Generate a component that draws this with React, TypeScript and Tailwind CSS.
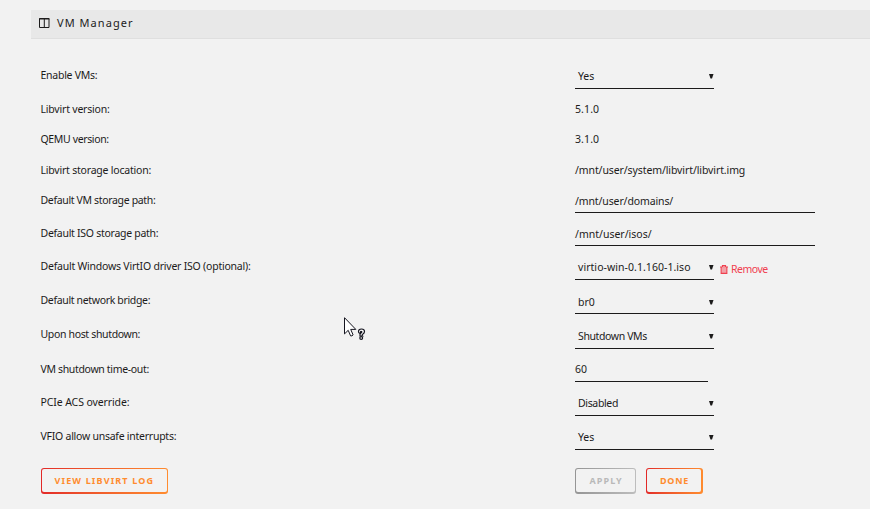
import type { ReactNode } from "react";
import clsx from "clsx";

type FieldProps = {
  children: ReactNode;
  className: string;
};

function Arrow() {
  return (
    <svg className="mt-[6px] mr-[0.5px] h-[5px] w-[4.5px] shrink-0" viewBox="0 0 4.5 5" fill="#1c1b1b">
      <path d="M0 0h4.5L3 4.5H1.5z" />
    </svg>
  );
}

function TrashIcon() {
  return (
    <svg className="h-[9px] w-2" viewBox="0 0 8 9" fill="none" stroke="currentColor">
      <path d="M0 2h8M2.5 1.5v-1h3v1M1.2 2v6.4h5.6V2" strokeWidth="1.2" />
      <path d="M3 3v5M5 3v5" strokeWidth="0.9" />
    </svg>
  );
}

function SelectField({ children, className }: FieldProps) {
  return (
    <div className={clsx("flex w-[139px] items-start justify-between border-b border-[#1c1b1b] pl-[3px]", className)}>
      <span>{children}</span>
      <Arrow />
    </div>
  );
}

function TextField({ children, className }: FieldProps) {
  return <div className={clsx("border-b border-[#1c1b1b]", className)}>{children}</div>;
}

type RowProps = {
  label: string;
  className: string;
  tracking: string;
  children: ReactNode;
};

function Row({ label, className, tracking, children }: RowProps) {
  return (
    <div className={clsx("flex items-start", className)}>
      <div className={clsx("w-[534.5px] shrink-0", tracking)}>{label}</div>
      {children}
    </div>
  );
}

type ActionButtonProps = {
  children: ReactNode;
  className: string;
  disabled?: boolean;
};

function ActionButton({ children, className, disabled }: ActionButtonProps) {
  return (
    <button
      disabled={disabled}
      className={clsx(
        "flex h-[26px] rounded-[3px] bg-linear-to-r pt-px pb-[2px] pl-px text-[9px] leading-[23px] font-bold",
        disabled ? "from-[#959595] to-[#bdbdbd] text-[#b9b9b9]" : "from-[#e22828] to-[#ff8c2f] text-[#ff8c2f]",
        className
      )}
    >
      <span className="h-[23px] w-full rounded-[2px] bg-[#f2f2f2] text-left whitespace-nowrap">{children}</span>
    </button>
  );
}

function HelpCursor() {
  return (
    <svg className="pointer-events-none absolute top-[317px] left-[344px] h-6 w-[22px]" viewBox="0 0 22 24">
      <path d="M.5.7v16.2l3.7-3.6 2.4 5.6q1.5.4 2.5-1L6.7 12.4h5.1z" fill="#fff" stroke="#15151f" />
      <path
        d="M14.5 14.5q0-2.5 3-2.5t3 2.5q0 1.5-1.5 2.5t-.5 2h-2.5q-.5-2 1-3t.5-1.5-1 .7-1 1-1-1.7z"
        fill="#fff"
        stroke="#15151f"
        strokeWidth="1.2"
      />
      <circle cx="17.2" cy="21" r="1.4" fill="#fff" stroke="#15151f" strokeWidth="1.2" />
    </svg>
  );
}

export default function App() {
  return (
    <div className="relative h-[509px] w-[870px] overflow-hidden bg-[#f2f2f2] pt-[10px] pl-[31px] font-['Noto_Sans',sans-serif] text-[10.5px] leading-4 text-[#1c1b1b]">
      <header className="flex h-[29px] items-center border-b border-[#dfdfdf] bg-[#e8e8e8] pb-[2px] pl-2">
        <svg className="h-[10px] w-[11px]" viewBox="0 0 11 10" fill="none" stroke="#1c1b1b">
          <path d="M.5.5h9.5v9H.5zM0 1h10.5M5.3 1v8" />
        </svg>
        <h1 className="pl-[7px] text-[11px] tracking-[1.05px]">VM Manager</h1>
      </header>

      <main className="pt-7 pl-[9.5px]">
        <Row label="Enable VMs:" className="h-[34px]" tracking="tracking-[-0.26px]">
          <SelectField className="h-[22px] pt-px tracking-[-0.1px]">Yes</SelectField>
        </Row>
        <Row label="Libvirt version:" className="h-[30px]" tracking="tracking-[-0.2px]">
          <span className="tracking-[0.1px]">5.1.0</span>
        </Row>
        <Row label="QEMU version:" className="h-[31px]" tracking="tracking-[-0.36px]">
          <span className="tracking-[0.1px]">3.1.0</span>
        </Row>
        <Row label="Libvirt storage location:" className="h-[30px]" tracking="tracking-[-0.21px]">
          <span className="tracking-[-0.1px]">/mnt/user/system/libvirt/libvirt.img</span>
        </Row>
        <Row label="Default VM storage path:" className="h-[33px]" tracking="tracking-[-0.34px]">
          <TextField className="h-[21px] w-60 pt-px tracking-[-0.12px]">/mnt/user/domains/</TextField>
        </Row>
        <Row label="Default ISO storage path:" className="h-[33px]" tracking="tracking-[-0.28px]">
          <TextField className="h-[21px] w-60 pt-px">/mnt/user/isos/</TextField>
        </Row>
        <Row label="Default Windows VirtIO driver ISO (optional):" className="h-[34px]" tracking="tracking-[-0.22px]">
          <SelectField className="h-[22px] pt-px tracking-[0.05px]">virtio-win-0.1.160-1.iso</SelectField>
          <a className="flex items-center gap-[3px] pt-[3px] pl-[6px] tracking-[-0.5px] text-[#f0404f]">
            <TrashIcon />
            Remove
          </a>
        </Row>
        <Row label="Default network bridge:" className="h-[34px]" tracking="tracking-[-0.34px]">
          <SelectField className="h-[22px] pt-[1.5px]">br0</SelectField>
        </Row>
        <Row label="Upon host shutdown:" className="h-[35px]" tracking="tracking-[-0.34px]">
          <SelectField className="h-[23px] pt-[2px] tracking-[-0.38px]">Shutdown VMs</SelectField>
        </Row>
        <Row label="VM shutdown time-out:" className="h-[33px]" tracking="tracking-[-0.34px]">
          <TextField className="h-[21px] w-[133px] tracking-[0.1px]">60</TextField>
        </Row>
        <Row label="PCIe ACS override:" className="h-[34px]" tracking="tracking-[-0.1px]">
          <SelectField className="h-[22px] pt-px tracking-[-0.35px]">Disabled</SelectField>
        </Row>
        <Row label="VFIO allow unsafe interrupts:" className="h-10" tracking="tracking-[-0.25px]">
          <SelectField className="h-[22px] pt-px tracking-[-0.1px]">Yes</SelectField>
        </Row>

        <div className="flex">
          <div className="w-[534.5px] shrink-0">
            <ActionButton className="w-[127px] pr-px tracking-[1.15px]">
              <span className="pl-[13px]">VIEW LIBVIRT LOG</span>
            </ActionButton>
          </div>
          <ActionButton disabled className="w-[61px] pr-px tracking-[1.1px]">
            <span className="pl-[13.5px]">APPLY</span>
          </ActionButton>
          <ActionButton className="ml-[10px] w-[57px] pr-[2px] tracking-[0.75px]">
            <span className="pl-[13px]">DONE</span>
          </ActionButton>
        </div>
      </main>

      <HelpCursor />
    </div>
  );
}
